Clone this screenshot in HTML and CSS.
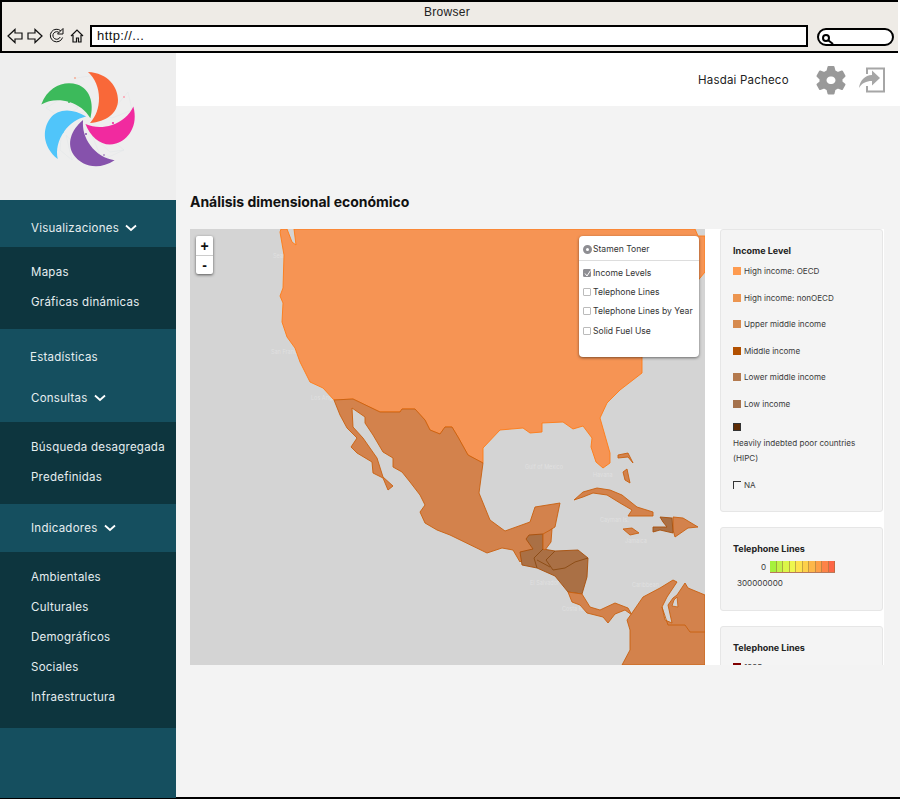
FILE: index.html
```html
<!DOCTYPE html>
<html lang="es">
<head>
    <meta charset="UTF-8">
    <title>Análisis dimensional económico</title>
    <link rel="stylesheet" href="styles.css">
</head>
<body>
    <div class="browser">
        <div class="browser-title">Browser</div>
        <div class="browser-bar">
            <svg class="nav-icons" width="80" height="18" viewBox="0 0 80 18" fill="none" stroke="#111" stroke-width="1.2">
                <path d="M1 9 L8 2.5 V6 H15 V12 H8 V15.5 Z"/>
                <path d="M35 9 L28 2.5 V6 H21 V12 H28 V15.5 Z"/>
                <path d="M54 4 A6.3 6.3 0 1 0 55.6 10.5" stroke-width="1"/>
                <path d="M52.4 5.8 A3.8 3.8 0 1 0 53.2 10" stroke-width="1"/>
                <path d="M50.5 7 H56 V1.5 Z" fill="#eeebe6" stroke-width="1"/>
                <path d="M64 9 L70 3 L76 9 M66 8 V15 H69.5 V11 H71.5 V15 H74 V8"/>
            </svg>
            <div class="url-box">http://...</div>
            <div class="search-box">
                <svg width="14" height="12" viewBox="0 0 14 12" fill="none" stroke="#000" stroke-width="2">
                    <circle cx="5" cy="5" r="3"/>
                    <path d="M7.5 7.5 L12 11"/>
                </svg>
            </div>
        </div>
    </div>

    <div class="app">
        <aside class="sidebar">
            <div class="logo-box">
                <svg width="110" height="110" viewBox="32 65 110 110">
                    <g class="web" stroke="#dfe3e5" stroke-width="0.4" fill="none">
                        <path d="M76 78 L96 75 L110 95 L113 110 L128 92 L132 110 L112 118 L98 112 L110 95"/>
                        <path d="M46 108 L62 98 L78 108 L62 118 L46 108 M62 118 L84 112 M78 108 L72 96"/>
                        <path d="M62 127 L60 150 L72 160 L66 135 L80 150 L72 160"/>
                        <path d="M92 135 L110 152 L124 150 L102 160 L92 135 L112 140 L124 150"/>
                    </g>
                    <g>
                        <circle cx="75" cy="78" r="0.7" fill="#f96839"/>
                        <circle cx="124" cy="97" r="0.9" fill="#f9a"/>
                        <circle cx="69" cy="102" r="1" fill="#3cba5b"/>
                        <circle cx="113" cy="123" r="1.1" fill="#f12a9f"/>
                        <circle cx="86" cy="134" r="1" fill="#8652ac"/>
                        <circle cx="104" cy="155" r="0.8" fill="#8652ac"/>
                        <circle cx="63" cy="132" r="0.8" fill="#50c5fa"/>
                    </g>
                    <path fill="#f96839" d="M88 72 C108 73 118 87 118 100 C118 113 106 122 90 123 C96 116 99 108 99 98 C99 88 95 78 88 72 Z"/>
                    <path fill="#f12a9f" transform="rotate(72 87 120.4)" d="M88 72 C108 73 118 87 118 100 C118 113 106 122 90 123 C96 116 99 108 99 98 C99 88 95 78 88 72 Z"/>
                    <path fill="#8652ac" transform="rotate(144 87 120.4)" d="M88 72 C108 73 118 87 118 100 C118 113 106 122 90 123 C96 116 99 108 99 98 C99 88 95 78 88 72 Z"/>
                    <path fill="#50c5fa" transform="rotate(216 87 120.4)" d="M88 72 C108 73 118 87 118 100 C118 113 106 122 90 123 C96 116 99 108 99 98 C99 88 95 78 88 72 Z"/>
                    <path fill="#3cba5b" transform="rotate(288 87 120.4)" d="M88 72 C108 73 118 87 118 100 C118 113 106 122 90 123 C96 116 99 108 99 98 C99 88 95 78 88 72 Z"/>
                </svg>
            </div>
            <nav class="menu">
                <div class="menu-group group-first">
                    <a class="menu-item">Visualizaciones <svg class="chevron" width="12" height="8" viewBox="0 0 12 8"><path d="M1 1.5 L6 6 L11 1.5"/></svg></a>
                </div>
                <div class="submenu sub-two">
                    <a class="menu-item">Mapas</a>
                    <a class="menu-item">Gráficas dinámicas</a>
                </div>
                <div class="menu-group group-mid">
                    <a class="menu-item single">Estadísticas</a>
                    <a class="menu-item">Consultas <svg class="chevron" width="12" height="8" viewBox="0 0 12 8"><path d="M1 1.5 L6 6 L11 1.5"/></svg></a>
                </div>
                <div class="submenu sub-two">
                    <a class="menu-item">Búsqueda desagregada</a>
                    <a class="menu-item">Predefinidas</a>
                </div>
                <div class="menu-group group-third">
                    <a class="menu-item">Indicadores <svg class="chevron" width="12" height="8" viewBox="0 0 12 8"><path d="M1 1.5 L6 6 L11 1.5"/></svg></a>
                </div>
                <div class="submenu sub-five">
                    <a class="menu-item">Ambientales</a>
                    <a class="menu-item">Culturales</a>
                    <a class="menu-item">Demográficos</a>
                    <a class="menu-item">Sociales</a>
                    <a class="menu-item">Infraestructura</a>
                </div>
                <div class="menu-rest"></div>
            </nav>
        </aside>

        <main class="content">
            <header class="topbar">
                <span class="user-name">Hasdai Pacheco</span>
                <svg class="gear" width="32" height="32" viewBox="0 0 32 32">
                    <path fill="#999" stroke="#999" stroke-width="2" stroke-linejoin="round" fill-rule="evenodd" d="M13.5 3 H18.5 L19.5 7 L23 9 L27 7.5 L29.5 12 L26.5 15 V18 L29.5 20.5 L27 25 L23 23.5 L19.5 25.5 L18.5 29.5 H13.5 L12.5 25.5 L9 23.5 L5 25 L2.5 20.5 L5.5 18 V15 L2.5 12 L5 7.5 L9 9 L12.5 7 Z M16 11.5 A4.8 4.8 0 1 0 16 21 A4.8 4.8 0 1 0 16 11.5 Z"/>
                </svg>
                <svg class="logout" width="28" height="26" viewBox="0 0 28 26">
                    <path fill="none" stroke="#a6a6a6" stroke-width="2" d="M9 7 V1.5 H26 V24.5 H9 V19"/>
                    <path fill="#a6a6a6" d="M14 3.5 L22 11 L14 18.5 V14 C8 14 4 16 1 21 C2 13 7 8.5 14 8 Z"/>
                </svg>
            </header>

            <h1 class="page-title">Análisis dimensional económico</h1>

            <div class="dashboard">
                <div class="map">
                    <svg class="map-shapes" width="515" height="436" viewBox="190 229 515 436">
                        <g class="labels">
                            <text x="271" y="354">San Francisco</text>
                            <text x="273" y="258">Seattle</text>
                            <text x="311" y="400">Los Angeles</text>
                            <text x="525" y="469">Gulf of Mexico</text>
                            <text x="593" y="477">Havana</text>
                            <text x="600" y="522">Cayman Is.</text>
                            <text x="625" y="543">Jamaica</text>
                            <text x="530" y="585">El Salvador</text>
                            <text x="632" y="587">Caribbean</text>
                            <text x="562" y="611">Costa Rica</text>
                        </g>
                        <path class="land usa" d="M280 232 L281 229 H287 L292 242 L296 245 L294 229 H690 L695 229 L698 236 H705 V272 L690 290 L675 320 L642 357 L642 373 L620 390 L607 403 L600 418 L610 453 L610 463 L603 468 L596 462 L591 447 L592 438 L583 426 L573 429 L563 422 L542 423 L542 432 L530 433 L523 428 L500 430 L483 448 L483 463 L468 455 L458 437 L452 427 H445 L440 434 L430 430 L425 420 L415 409 H402 L400 412 H380 L353 399 L334 400 L323 388 L310 382 L300 362 L295 348 L287 337 L282 322 L283 303 L280 296 L283 288 L284 255 Z"/>
                        <path class="land mid" d="M334 400 L353 399 L380 412 H400 L402 409 H415 L425 420 L430 430 L440 434 L445 427 H452 L458 437 L468 455 L483 463 L479 493 L490 520 L505 531 L530 522 L535 507 L560 503 L555 527 L550 530 L543 549 H533 L520 562 L513 550 L502 548 L487 553 L450 535 L437 530 L425 523 L420 512 L425 505 L420 495 L410 482 L402 472 L393 467 L393 458 L383 452 L373 435 L365 423 L365 417 L352 408 L353 427 L363 438 L377 458 L383 477 L393 486 L388 490 L383 478 L373 473 L372 462 L357 453 L351 447 L357 438 L347 428 L340 415 Z"/>
                        <path class="land low" d="M520 552 L533 549 L526 539 L529 535 L543 534 V549 L555 551 L578 550 L588 558 L587 577 L582 594 L568 592 L555 576 L537 568 L522 565 Z"/>
                        <path class="land low-line" d="M543 549 L534 558 L537 568 M555 551 L546 560 L553 570 L565 568 L575 562 L588 558 M537 560 L550 567"/>
                        <path class="land mid" d="M543 534 L552 529 L551 542 L545 550 L543 549 Z"/>
                        <path class="land mid" d="M568 592 L582 594 L590 607 L600 610 L615 603 L628 608 L632 615 L625 610 L615 614 L608 623 L603 617 L587 613 L580 605 L572 602 Z"/>
                        <path class="land mid" d="M574 500 L583 492 L597 488 L610 490 L622 495 L637 507 L653 512 V516 L628 516 L632 510 L620 503 L607 495 L593 493 L583 497 Z"/>
                        <path class="land mid" d="M623 529 L632 528 L639 533 L630 535 Z"/>
                        <path class="land mid" d="M618 455 L628 453 L633 463 L628 457 L618 458 Z M623 472 L627 469 L630 483 L625 480 Z"/>
                        <path class="land mid" d="M673 517 L683 518 L698 527 L688 528 L675 537 L673 530 Z"/>
                        <path class="land low" d="M660 517 L672 518 L673 533 L660 530 L653 532 V527 L667 527 L663 522 Z"/>
                        <path class="land mid" d="M632 613 L643 597 L660 588 L673 580 L677 582 L667 597 L662 607 L665 620 L672 623 L668 605 L673 598 L677 595 L685 583 L688 588 L705 595 V665 H622 L630 650 L630 630 L627 620 Z"/>
                        <path class="lake" d="M674 600 L672 606 L678 607 L677 597 Z"/>
                        <path class="land mid-line" d="M662 607 L668 625 L685 625 L690 632 L705 632"/>
                    </svg>
                    <div class="zoom-control">
                        <button class="zoom-btn">+</button>
                        <button class="zoom-btn">-</button>
                    </div>
                    <div class="layers">
                        <label class="layer-row base-row"><span class="radio"></span>Stamen Toner</label>
                        <label class="layer-row"><span class="check checked"><svg width="9" height="9" viewBox="0 0 9 9"><path d="M2 4.5 L4 7 L7.5 1.5" fill="none" stroke="#fff" stroke-width="1"/></svg></span>Income Levels</label>
                        <label class="layer-row"><span class="check"></span>Telephone Lines</label>
                        <label class="layer-row"><span class="check"></span>Telephone Lines by Year</label>
                        <label class="layer-row"><span class="check"></span>Solid Fuel Use</label>
                    </div>
                </div>

                <div class="legends">
                    <section class="legend income-card">
                        <h3 class="legend-title">Income Level</h3>
                        <div class="legend-row"><i class="swatch" style="background:#fe9b50"></i>High income: OECD</div>
                        <div class="legend-row"><i class="swatch" style="background:#ec9550"></i>High income: nonOECD</div>
                        <div class="legend-row"><i class="swatch" style="background:#d68a4e"></i>Upper middle income</div>
                        <div class="legend-row"><i class="swatch" style="background:#b25000"></i>Middle income</div>
                        <div class="legend-row"><i class="swatch" style="background:#b47a4e"></i>Lower middle income</div>
                        <div class="legend-row"><i class="swatch" style="background:#a5724d"></i>Low income</div>
                        <div class="legend-block"><i class="swatch swatch-dark"></i><div>Heavily indebted poor countries (HIPC)</div></div>
                        <div class="legend-row na-row"><i class="swatch swatch-na"></i>NA</div>
                    </section>
                    <section class="legend scale-card">
                        <h3 class="legend-title">Telephone Lines</h3>
                        <div class="scale">
                            <span class="scale-min">0</span>
                            <div class="scale-bar">
                                <i style="background:#a6f13d"></i><i style="background:#c2f247"></i><i style="background:#dcf648"></i><i style="background:#eef64e"></i><i style="background:#fde24e"></i><i style="background:#fdd04a"></i><i style="background:#fdb74a"></i><i style="background:#fd9f48"></i><i style="background:#fd8347"></i><i style="background:#fd6646"></i>
                            </div>
                        </div>
                        <div class="scale-max">300000000</div>
                    </section>
                    <section class="legend year-card">
                        <h3 class="legend-title">Telephone Lines</h3>
                        <div class="legend-row"><i class="swatch swatch-thin"></i>1995</div>
                    </section>
                </div>
            </div>
        </main>
    </div>
</body>
</html>
```

FILE: styles.css
```css
*{
    margin: 0;
    padding: 0;
    box-sizing: border-box;
}
html, body{
    width: 900px;
    height: 800px;
    overflow: hidden;
}
body{
    font-family: "Inter", "Liberation Sans", sans-serif;
    background: #fff;
}

/* browser chrome */
.browser{
    width: 898px;
    height: 53px;
    background: #eeebe6;
    border: 2px solid #000;
    border-right: 0;
    font-family: "Liberation Sans", sans-serif;
}
.browser-title{
    height: 23px;
    padding: 3px 6px 0 0;
    text-align: center;
    font-size: 12px;
    letter-spacing: 0.3px;
    color: #222;
}
.browser-bar{
    display: flex;
    align-items: flex-start;
    padding-left: 5px;
}
.nav-icons{
    flex: none;
    margin-top: 2px;
}
.url-box{
    width: 718px;
    height: 22px;
    margin-left: 3px;
    padding: 1px 0 0 5px;
    background: #fff;
    border: 2px solid #000;
    font-size: 13px;
    letter-spacing: 0.4px;
    color: #111;
}
.search-box{
    width: 77px;
    height: 18px;
    margin: 3px 0 0 9px;
    padding: 1px 0 0 2px;
    background: #fff;
    border: 2px solid #000;
    border-radius: 9px;
}

/* page */
.app{
    display: flex;
    height: 746px;
    border-bottom: 1px solid #000;
}
.sidebar{
    width: 176px;
    flex: none;
    display: flex;
    flex-direction: column;
}
.logo-box{
    height: 147px;
    padding: 12px 0 0 32px;
    background: #eeeeee;
}
.menu{
    flex: 1;
    display: flex;
    flex-direction: column;
    font-size: 11.5px;
    letter-spacing: 0.25px;
}
.menu-item{
    display: block;
    color: #e6eef0;
    height: 30px;
    line-height: 30px;
    padding-left: 31px;
    white-space: nowrap;
}
.chevron{
    margin-left: 3px;
    fill: none;
    stroke: #fff;
    stroke-width: 1.8;
}
.menu-group{
    background: #154f5f;
}
.group-first{
    height: 47px;
    padding-top: 13px;
}
.group-third{
    height: 48px;
    padding-top: 9px;
}
.group-mid{
    height: 93px;
    padding-top: 13px;
}
.group-mid .menu-item + .menu-item{
    margin-top: 11px;
}
.single{
    padding-left: 30px;
}
.submenu{
    background: #0d353e;
}
.sub-two{
    height: 82px;
    padding-top: 10px;
}
.sub-five{
    height: 176px;
    padding-top: 10px;
}
.menu-rest{
    flex: 1;
    background: #154f5f;
}

.content{
    flex: 1;
    background: #f3f3f3;
    border-bottom: 1px solid #000;
}
.topbar{
    height: 53px;
    background: #fff;
    display: flex;
    align-items: center;
    padding-left: 522px;
}
.user-name{
    width: 117px;
    font-size: 11.5px;
    letter-spacing: 0.2px;
    color: #222;
}
.gear{
    flex: none;
}
.logout{
    margin-left: 11px;
    flex: none;
}
.page-title{
    margin: 86px 0 0 14px;
    height: 37px;
    font-size: 14px;
    line-height: 20px;
    font-weight: 700;
    letter-spacing: -0.03px;
    color: #111;
}

.dashboard{
    display: flex;
    margin-left: 14px;
    width: 694px;
    height: 436px;
    background: #fff;
}
.map{
    position: relative;
    width: 515px;
    height: 436px;
    background: #d4d4d4;
    overflow: hidden;
}
.map-shapes{
    display: block;
}
.labels text{
    font-size: 5.5px;
    fill: #e6e6e6;
    fill-opacity: 0.7;
}
.land{
    stroke-width: 0.9;
    stroke-linejoin: round;
}
.usa{
    fill: #f69454;
    stroke: #ff7a14;
}
.mid{
    fill: #d3824c;
    stroke: #c8600f;
}
.low{
    fill: #aa7045;
    stroke: #a84f0a;
}
.low-line{
    fill: none;
    stroke: #8a4a12;
}
.mid-line{
    fill: none;
    stroke: #c8600f;
}
.lake{
    fill: #d4d4d4;
    stroke: #c8600f;
    stroke-width: 0.8;
}

.zoom-control{
    position: absolute;
    left: 6px;
    top: 7px;
    width: 17px;
    background: #fff;
    border-radius: 2px;
    box-shadow: 0 1px 3px rgba(0,0,0,0.6);
}
.zoom-btn{
    display: block;
    width: 17px;
    height: 19px;
    border: 0;
    background: none;
    font-family: "Liberation Sans", sans-serif;
    font-size: 14px;
    font-weight: 700;
    color: #111;
}
.zoom-btn + .zoom-btn{
    border-top: 1px solid #ccc;
}
.layers{
    position: absolute;
    left: 389px;
    top: 7px;
    width: 120px;
    height: 121px;
    background: #fff;
    border-radius: 4px;
    box-shadow: 0 1px 3px rgba(0,0,0,0.5);
    font-size: 8.6px;
    color: #333;
}
.layer-row{
    display: flex;
    align-items: center;
    height: 19.4px;
    padding-left: 4px;
    white-space: nowrap;
}
.base-row{
    height: 25px;
    padding-top: 2px;
    margin-bottom: 2px;
    border-bottom: 1px solid #ddd;
}
.radio{
    width: 9px;
    height: 9px;
    margin-right: 1px;
    border-radius: 50%;
    border: 3px solid #8e8e93;
    background: #fff;
}
.check{
    display: block;
    width: 8px;
    height: 8px;
    margin-right: 2px;
    border: 1px solid #bbb;
    border-radius: 1px;
    line-height: 0;
}
.checked{
    background: #8e8e93;
    border-color: #8e8e93;
}
.checked svg{
    margin: -1px;
}

.legends{
    flex: 1;
    padding-left: 15px;
    width: 179px;
    overflow: hidden;
}
.legend{
    width: 163px;
    background: #f4f4f4;
    border: 1px solid #e6e6e6;
    border-radius: 3px;
    padding: 0 12px;
    margin-bottom: 15px;
    font-size: 8.1px;
    color: #3a3a3a;
}
.income-card{
    height: 283px;
    padding-top: 15px;
}
.scale-card{
    height: 84px;
    padding-top: 15px;
}
.year-card{
    height: 60px;
    padding-top: 15px;
}
.legend-title{
    font-size: 9px;
    line-height: 12px;
    font-weight: 700;
    color: #222;
    margin-bottom: 6px;
}
.income-card .legend-title{
    margin-bottom: 7px;
}
.legend-row{
    display: flex;
    align-items: center;
    height: 26.5px;
    padding-bottom: 12px;
}
.swatch{
    width: 8px;
    height: 8px;
    margin-right: 3px;
    flex: none;
}
.swatch-dark{
    display: block;
    margin-bottom: 5px;
    background: #5f2d06;
    border: 1px solid #333;
}
.swatch-na{
    border-top: 1px solid #333;
    border-left: 1px solid #333;
}
.swatch-thin{
    height: 2px;
    margin-top: -6px;
    background: #800000;
}
.legend-block{
    line-height: 15px;
    margin: 0 0 14px;
}
.na-row{
    height: 10px;
    padding-bottom: 0;
}
.scale{
    display: flex;
    align-items: center;
    margin-top: 5px;
}
.scale-min{
    width: 33px;
    text-align: right;
    margin-right: 4px;
}
.scale-bar{
    display: flex;
    height: 12px;
    width: 65px;
    border-bottom: 1px solid #b8795a;
}
.scale-bar i{
    flex: 1;
    border-right: 1px solid rgba(150,110,60,0.55);
}
.scale-max{
    margin: 5px 0 0 4px;
}
```
